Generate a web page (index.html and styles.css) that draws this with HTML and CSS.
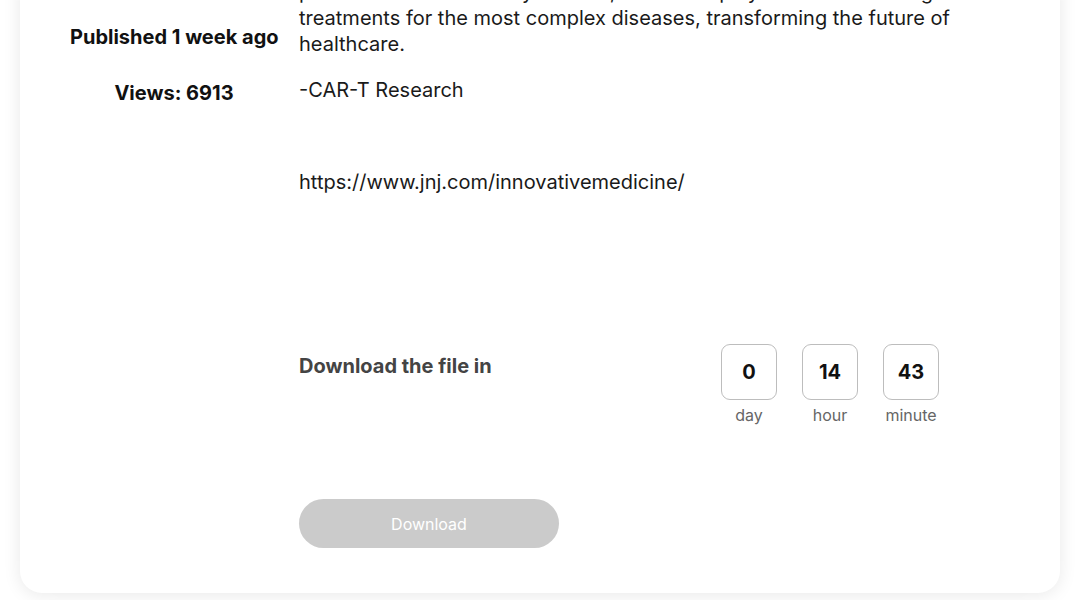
FILE: index.html
```html
<!DOCTYPE html>
<html lang="en">

<head>
	<meta charset="utf-8">
	<title>CAR-T Research</title>
	<link rel="stylesheet" href="styles.css">
</head>

<body>
	<div class="page">
		<article class="post">
			<aside class="meta">
				<p class="published">Published 1 week ago</p>
				<p class="views">Views: 6913</p>
			</aside>

			<section class="body">
				<p>pursue science that truly matters, and we deploy our talent to bring treatments for the most complex diseases, transforming the future of healthcare.</p>
				<p>-CAR-T Research</p>
				<p><br></p>
				<p>https://www.jnj.com/innovativemedicine/</p>

				<div class="countdown">
					<h4 class="countdown-title">Download the file in</h4>
					<div class="timer">
						<div class="unit">
							<span class="num">0</span>
							<span class="label">day</span>
						</div>
						<div class="unit">
							<span class="num">14</span>
							<span class="label">hour</span>
						</div>
						<div class="unit">
							<span class="num">43</span>
							<span class="label">minute</span>
						</div>
					</div>
				</div>

				<button class="download" disabled>Download</button>
			</section>
		</article>
	</div>
</body>

</html>
```

FILE: styles.css
```css
* {
	margin: 0;
	padding: 0;
	box-sizing: border-box;
}

body {
	background: #fff;
	font-family: Inter, "Noto Sans", sans-serif;
	color: #111;
	overflow: hidden;
}

.page {
	padding: 0 20px 7px;
}

/* the page is scrolled down, top of the card is out of view */
.post {
	margin-top: -21px;
	background: #fff;
	border-radius: 0 0 22px 22px;
	box-shadow: 0 2px 18px rgba(0, 0, 0, .09);
	display: grid;
	grid-template-columns: 208px 1fr;
	column-gap: 21px;
	padding: 0 60px 45px 50px;
}

.meta {
	text-align: center;
	font-weight: 700;
	font-size: 20px;
	line-height: 26px;
	color: #111;
	padding-top: 45px;
	white-space: nowrap;
}

.views {
	margin-top: 30px;
}

.body p {
	font-size: 20px;
	line-height: 26px;
	margin-bottom: 20px;
	color: #1a1a1a;
}

.countdown {
	display: flex;
	justify-content: space-between;
	align-items: flex-start;
	margin-top: 149px;
	padding-right: 61px;
}

.countdown-title {
	font-size: 20px;
	line-height: 26px;
	font-weight: 700;
	color: #444;
	padding-top: 9px;
}

.timer {
	display: flex;
	gap: 25px;
}

.unit {
	display: flex;
	flex-direction: column;
	align-items: center;
	width: 56px;
}

.num {
	width: 56px;
	height: 56px;
	border: 1px solid #bdbdbd;
	border-radius: 9px;
	display: flex;
	align-items: center;
	justify-content: center;
	font-size: 20px;
	font-weight: 700;
	color: #111;
}

.label {
	margin-top: 5px;
	font-size: 16px;
	line-height: 20px;
	color: #666;
	white-space: nowrap;
}

.download {
	display: block;
	margin-top: 74px;
	width: 260px;
	height: 49px;
	border: none;
	border-radius: 25px;
	background: #cbcbcb;
	color: #fff;
	font-family: Inter, "Noto Sans", sans-serif;
	font-size: 16px;
}
```
